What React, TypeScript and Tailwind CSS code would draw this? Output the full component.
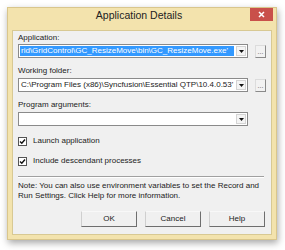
import type React from 'react'

const font = { fontFamily: '"Liberation Sans", Arial, sans-serif' }

const DropArrow: React.FC = () => (
  <div className="flex h-full w-[10px] items-center justify-center border border-[#d4d4d4] bg-[#f4f4f4]">
    <svg width="5" height="3" viewBox="0 0 5 3">
      <path d="M0 0H5L2.5 3Z" fill="#111" />
    </svg>
  </div>
)

interface ComboProps {
  text?: string
  selected?: boolean
}

const Combo: React.FC<ComboProps> = ({ text, selected }) => (
  <div className="flex h-[14px] w-[230px] items-stretch border border-[#8a8a8a] bg-white p-px">
    <div
      className={
        selected
          ? 'flex-1 overflow-hidden whitespace-nowrap bg-[#3399ff] pl-px text-[8px] leading-[10px] text-white'
          : 'flex-1 overflow-hidden whitespace-nowrap pl-px text-[8px] leading-[10px] text-[#222]'
      }
    >
      {text}
    </div>
    <div className="ml-[2px]">
      <DropArrow />
    </div>
  </div>
)

const BrowseButton: React.FC = () => (
  <div className="flex h-[13px] w-[11px] items-center justify-center border border-b-[#8a8a8a] border-l-[#dcdcdc] border-r-[#8a8a8a] border-t-[#dcdcdc] bg-[#f2f2f2] text-[7px] leading-none text-[#555]">
    ...
  </div>
)

const Check: React.FC<{ label: string }> = ({ label }) => (
  <div className="flex items-center">
    <div className="flex h-[9px] w-[9px] items-center justify-center border border-[#555] bg-white">
      <svg width="7" height="7" viewBox="0 0 7 7">
        <path d="M1 3.5L2.8 5.3L6 1.5" fill="none" stroke="#111" strokeWidth="1.4" />
      </svg>
    </div>
    <span className="ml-[6px] text-[8px] leading-[10px] text-[#222]">{label}</span>
  </div>
)

const DlgButton: React.FC<{ label: string }> = ({ label }) => (
  <div className="flex h-[16px] w-[56px] items-center justify-center border border-b-[#6e6e6e] border-l-[#cfcfcf] border-r-[#6e6e6e] border-t-[#f8f8f8] bg-[#f0f0f0] text-[8px] text-[#222]">
    {label}
  </div>
)

export default function App() {
  return (
    <div className="h-[250px] w-[285px] overflow-hidden bg-white pt-[7px] pl-[7px]" style={font}>
      <div className="flex h-[233px] w-[270px] flex-col border border-[#d9c68c] bg-[#f3e3ad] shadow-[1px_3px_7px_rgba(0,0,0,0.35)]">
        {/* title bar */}
        <div className="flex h-[22px] items-start">
          <div className="flex-1 pt-[1px] pl-[20px] text-center text-[10.5px] leading-[13px] text-[#222]">
            Application Details
          </div>
          <div className="mr-[3px] flex h-[13px] w-[23px] items-center justify-center bg-[#c9504a]">
            <svg width="7" height="7" viewBox="0 0 7 7">
              <path d="M1 1L6 6M6 1L1 6" stroke="#fff" strokeWidth="1.5" />
            </svg>
          </div>
        </div>

        {/* client area */}
        <div className="mx-[4px] mb-[4px] flex-1 border border-[#d8c993] bg-[#f0f0f0] px-[5px] pt-[2px]">
          <div className="h-[10px] text-[8px] leading-[10px] text-[#222]">Application:</div>
          <div className="mt-px flex items-center justify-between">
            <Combo selected text={'rid\\GridControl\\GC_ResizeMove\\bin\\GC_ResizeMove.exe\''} />
            <BrowseButton />
          </div>

          <div className="mt-[8px] h-[10px] text-[8px] leading-[10px] text-[#222]">Working folder:</div>
          <div className="mt-[2px] flex items-center justify-between">
            <Combo text={'C:\\Program Files (x86)\\Syncfusion\\Essential QTP\\10.4.0.53\''} />
            <BrowseButton />
          </div>

          <div className="mt-[8px] h-[10px] text-[8px] leading-[10px] text-[#222]">Program arguments:</div>
          <div className="mt-[2px] flex items-center">
            <Combo />
          </div>

          <div className="mt-[10px]">
            <Check label="Launch application" />
          </div>
          <div className="mt-[10px]">
            <Check label="Include descendant processes" />
          </div>

          <div className="mt-[10px] h-[2px] w-[246px] border-t border-b border-t-[#a0a0a0] border-b-white" />

          <div className="mt-[3px] text-[8px] leading-[10px] text-[#222]">
            Note: You can also use environment variables to set the Record and
            <br />
            Run Settings. Click Help for more information.
          </div>

          <div className="mt-[10px] flex justify-end gap-[8px] pr-px">
            <DlgButton label="OK" />
            <DlgButton label="Cancel" />
            <DlgButton label="Help" />
          </div>
        </div>
      </div>
    </div>
  )
}
